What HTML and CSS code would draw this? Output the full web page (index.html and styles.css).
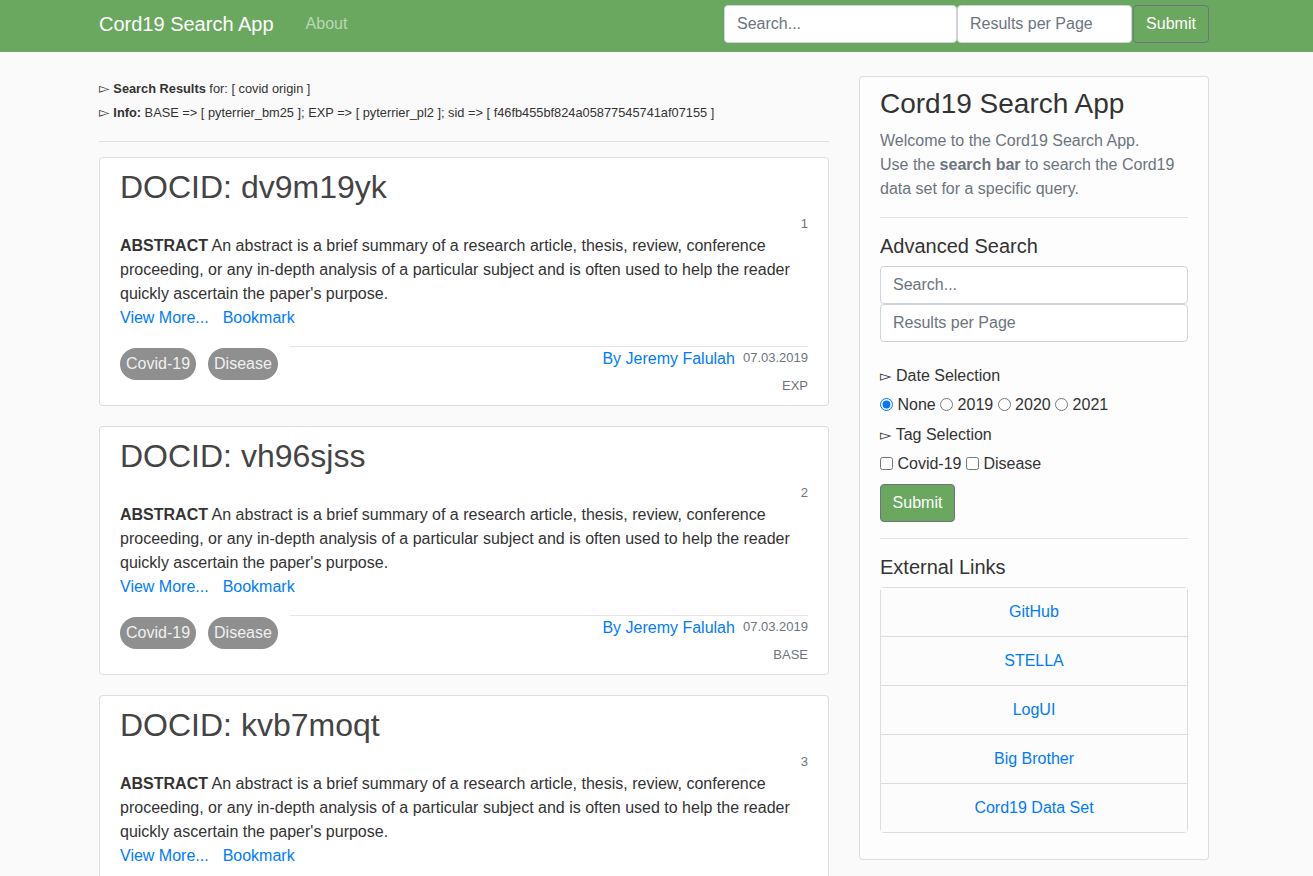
FILE: index.html
```html
<!DOCTYPE html>
<html lang="en">
<head>
<meta charset="utf-8">
<title>Cord19 Search App</title>
<link rel="stylesheet" href="styles.css">
</head>
<body>
<nav class="navbar">
  <div class="nav-inner">
    <a class="brand" href="#">Cord19 Search App</a>
    <a class="nav-link" href="#">About</a>
    <form class="nav-form">
      <input class="nav-input nav-search" type="text" placeholder="Search...">
      <input class="nav-input nav-rpp" type="text" placeholder="Results per Page">
      <button class="nav-btn" type="button">Submit</button>
    </form>
  </div>
</nav>

<div class="container">
  <main class="main-col">
    <div class="info">
      <div class="info-line"><span class="tri">▻</span> <b>Search Results</b> for: [ covid origin ]</div>
      <div class="info-line"><span class="tri">▻</span> <b>Info:</b> BASE =&gt; [ pyterrier_bm25 ]; EXP =&gt; [ pyterrier_pl2 ]; sid =&gt; [ f46fb455bf824a05877545741af07155 ]</div>
    </div>
    <hr class="info-hr">

    <article class="card">
      <h2 class="doc-title">DOCID: dv9m19yk</h2>
      <div class="rank">1</div>
      <p class="abstract"><b>ABSTRACT</b> An abstract is a brief summary of a research article, thesis, review, conference proceeding, or any in-depth analysis of a particular subject and is often used to help the reader quickly ascertain the paper's purpose.</p>
      <div class="links"><a href="#">View More...</a><a href="#">Bookmark</a></div>
      <div class="card-foot">
        <div class="badges"><span class="badge">Covid-19</span><span class="badge">Disease</span></div>
        <div class="meta">
          <div class="meta-top"><a href="#" class="author">By Jeremy Falulah</a><span class="date">07.03.2019</span></div>
          <div class="system">EXP</div>
        </div>
      </div>
    </article>

    <article class="card">
      <h2 class="doc-title">DOCID: vh96sjss</h2>
      <div class="rank">2</div>
      <p class="abstract"><b>ABSTRACT</b> An abstract is a brief summary of a research article, thesis, review, conference proceeding, or any in-depth analysis of a particular subject and is often used to help the reader quickly ascertain the paper's purpose.</p>
      <div class="links"><a href="#">View More...</a><a href="#">Bookmark</a></div>
      <div class="card-foot">
        <div class="badges"><span class="badge">Covid-19</span><span class="badge">Disease</span></div>
        <div class="meta">
          <div class="meta-top"><a href="#" class="author">By Jeremy Falulah</a><span class="date">07.03.2019</span></div>
          <div class="system">BASE</div>
        </div>
      </div>
    </article>

    <article class="card">
      <h2 class="doc-title">DOCID: kvb7moqt</h2>
      <div class="rank">3</div>
      <p class="abstract"><b>ABSTRACT</b> An abstract is a brief summary of a research article, thesis, review, conference proceeding, or any in-depth analysis of a particular subject and is often used to help the reader quickly ascertain the paper's purpose.</p>
      <div class="links"><a href="#">View More...</a><a href="#">Bookmark</a></div>
      <div class="card-foot">
        <div class="badges"><span class="badge">Covid-19</span><span class="badge">Disease</span></div>
        <div class="meta">
          <div class="meta-top"><a href="#" class="author">By Jeremy Falulah</a><span class="date">07.03.2019</span></div>
          <div class="system">EXP</div>
        </div>
      </div>
    </article>
  </main>

  <aside class="side-col">
    <div class="side-card">
      <h3 class="side-title">Cord19 Search App</h3>
      <p class="side-text">Welcome to the Cord19 Search App.<br>Use the <b>search bar</b> to search the Cord19 data set for a specific query.</p>
      <hr class="side-hr">
      <h4 class="side-h4">Advanced Search</h4>
      <input class="side-input" type="text" placeholder="Search...">
      <input class="side-input" type="text" placeholder="Results per Page">
      <div class="sel-label"><span class="tri2">▻</span> Date Selection</div>
      <div class="opts">
        <label><input type="radio" name="date" checked> None</label>
        <label><input type="radio" name="date"> 2019</label>
        <label><input type="radio" name="date"> 2020</label>
        <label><input type="radio" name="date"> 2021</label>
      </div>
      <div class="sel-label"><span class="tri2">▻</span> Tag Selection</div>
      <div class="opts">
        <label><input type="checkbox"> Covid-19</label>
        <label><input type="checkbox"> Disease</label>
      </div>
      <button class="side-btn" type="button">Submit</button>
      <hr class="side-hr">
      <h4 class="side-h4">External Links</h4>
      <ul class="list-group">
        <li><a href="#">GitHub</a></li>
        <li><a href="#">STELLA</a></li>
        <li><a href="#">LogUI</a></li>
        <li><a href="#">Big Brother</a></li>
        <li><a href="#">Cord19 Data Set</a></li>
      </ul>
    </div>
  </aside>
</div>
</body>
</html>
```

FILE: styles.css
```css
* { box-sizing: border-box; }
html, body { margin: 0; padding: 0; }
body {
  font-family: "Liberation Sans", Arial, sans-serif;
  font-size: 16px;
  line-height: 1.5;
  color: #333333;
  background: #fafafa;
}
a { color: #007bff; text-decoration: none; }

.navbar {
  background: #6aa85f;
  height: 52px;
}
.nav-inner {
  width: 1110px;
  margin-left: 99px;
  height: 52px;
  display: flex;
  align-items: center;
}
.brand {
  color: #ffffff;
  font-size: 20px;
  line-height: 30px;
  margin-right: 32px;
  padding-bottom: 4px;
}
.nav-link {
  color: rgba(255,255,255,0.55);
  font-size: 16px;
  padding-bottom: 4px;
}
.nav-form {
  margin-left: auto;
  display: flex;
  align-items: center;
  margin-top: -5px;
}
.nav-input {
  height: 38px;
  border: 1px solid #ced4da;
  border-radius: 4px;
  font-family: inherit;
  font-size: 16px;
  padding: 6px 12px;
  color: #495057;
  background: #fff;
}
.nav-input::placeholder, .side-input::placeholder { color: #6c757d; }
.nav-search { width: 233px; }
.nav-rpp { width: 175px; }
.nav-btn {
  height: 38px;
  width: 76px;
  margin-left: 1px;
  background: #6aa85f;
  border: 1px solid #6c757d;
  border-radius: 4px;
  color: #ffffff;
  font-family: inherit;
  font-size: 16px;
}

.container {
  width: 1110px;
  margin-left: 99px;
  display: flex;
  gap: 30px;
  align-items: flex-start;
}
.main-col { width: 730px; padding-top: 25px; }
.side-col { width: 350px; padding-top: 24px; }

.info { font-size: 12.8px; line-height: 24px; color: #333; }
.info-line { height: 24px; }
.tri { font-size: 14px; line-height: 1; font-family: "DejaVu Sans", sans-serif; }
.info-hr {
  border: 0;
  border-top: 1px solid rgba(0,0,0,0.1);
  margin: 16px 0 15px;
}

.card {
  background: #ffffff;
  border: 1px solid rgba(0,0,0,0.125);
  border-radius: 4px;
  padding: 10px 20px 9px;
  margin-bottom: 20px;
}
.doc-title {
  font-size: 32px;
  font-weight: 400;
  line-height: 38px;
  margin: 0;
  color: #444444;
}
.rank {
  text-align: right;
  font-size: 13px;
  line-height: 20px;
  color: #6c757d;
  margin-top: 8px;
}
.abstract { margin: 0; line-height: 24px; }
.links { display: flex; gap: 14px; line-height: 24px; }
.card-foot {
  display: flex;
  margin-top: 16px;
}
.badges { display: flex; gap: 12px; padding-top: 2px; }
.badge {
  background: #8f8f8f;
  color: #f0f0f0;
  border-radius: 16px;
  height: 32px;
  line-height: 32px;
  padding: 0 6px;
  font-size: 16px;
}
.meta {
  flex: 1;
  margin-left: 12px;
  border-top: 1px solid rgba(0,0,0,0.1);
  text-align: right;
}
.meta-top { line-height: 22px; padding-top: 0; }
.author { font-size: 16px; }
.date { font-size: 13px; color: #6c757d; margin-left: 8px; vertical-align: 2px; }
.system { font-size: 13px; color: #6c757d; line-height: 20px; margin-top: 6px; }

.side-card {
  background: #fdfdfd;
  border: 1px solid rgba(0,0,0,0.125);
  border-radius: 4px;
  padding: 10px 20px 26px;
}
.side-title {
  font-size: 28px;
  font-weight: 400;
  line-height: 1.2;
  color: #333;
  margin: 0 0 8px;
}
.side-text { color: #6c757d; margin: 0; line-height: 24px; }
.side-hr {
  border: 0;
  border-top: 1px solid rgba(0,0,0,0.1);
  margin: 16px 0;
}
.side-h4 {
  font-size: 20px;
  font-weight: 400;
  line-height: 24px;
  margin: 0 0 8px;
  color: #333;
}
.side-input {
  display: block;
  width: 100%;
  height: 38px;
  border: 1px solid #ced4da;
  border-radius: 4px;
  font-family: inherit;
  font-size: 16px;
  padding: 6px 12px;
  color: #495057;
  background: #fff;
}
.sel-label { margin-top: 22px; line-height: 24px; height: 24px; }
.opts + .sel-label { margin-top: 6px; }
.tri2 { font-size: 15px; line-height: 1; font-family: "DejaVu Sans", sans-serif; }
.opts { margin-top: 5px; line-height: 24px; }
.opts input { margin: 0; vertical-align: -1px; }
.side-btn {
  margin-top: 8px;
  height: 38px;
  width: 75px;
  background: #6aa85f;
  border: 1px solid #6c757d;
  border-radius: 4px;
  color: #ffffff;
  font-family: inherit;
  font-size: 16px;
  display: block;
}
.list-group {
  list-style: none;
  margin: 0;
  padding: 0;
  border: 1px solid rgba(0,0,0,0.125);
  border-radius: 4px;
}
.list-group li {
  background: #fcfcfc;
  height: 49px;
  line-height: 48px;
  text-align: center;
  border-top: 1px solid rgba(0,0,0,0.125);
}
.list-group li:first-child { border-top: 0; height: 48px; }
```
